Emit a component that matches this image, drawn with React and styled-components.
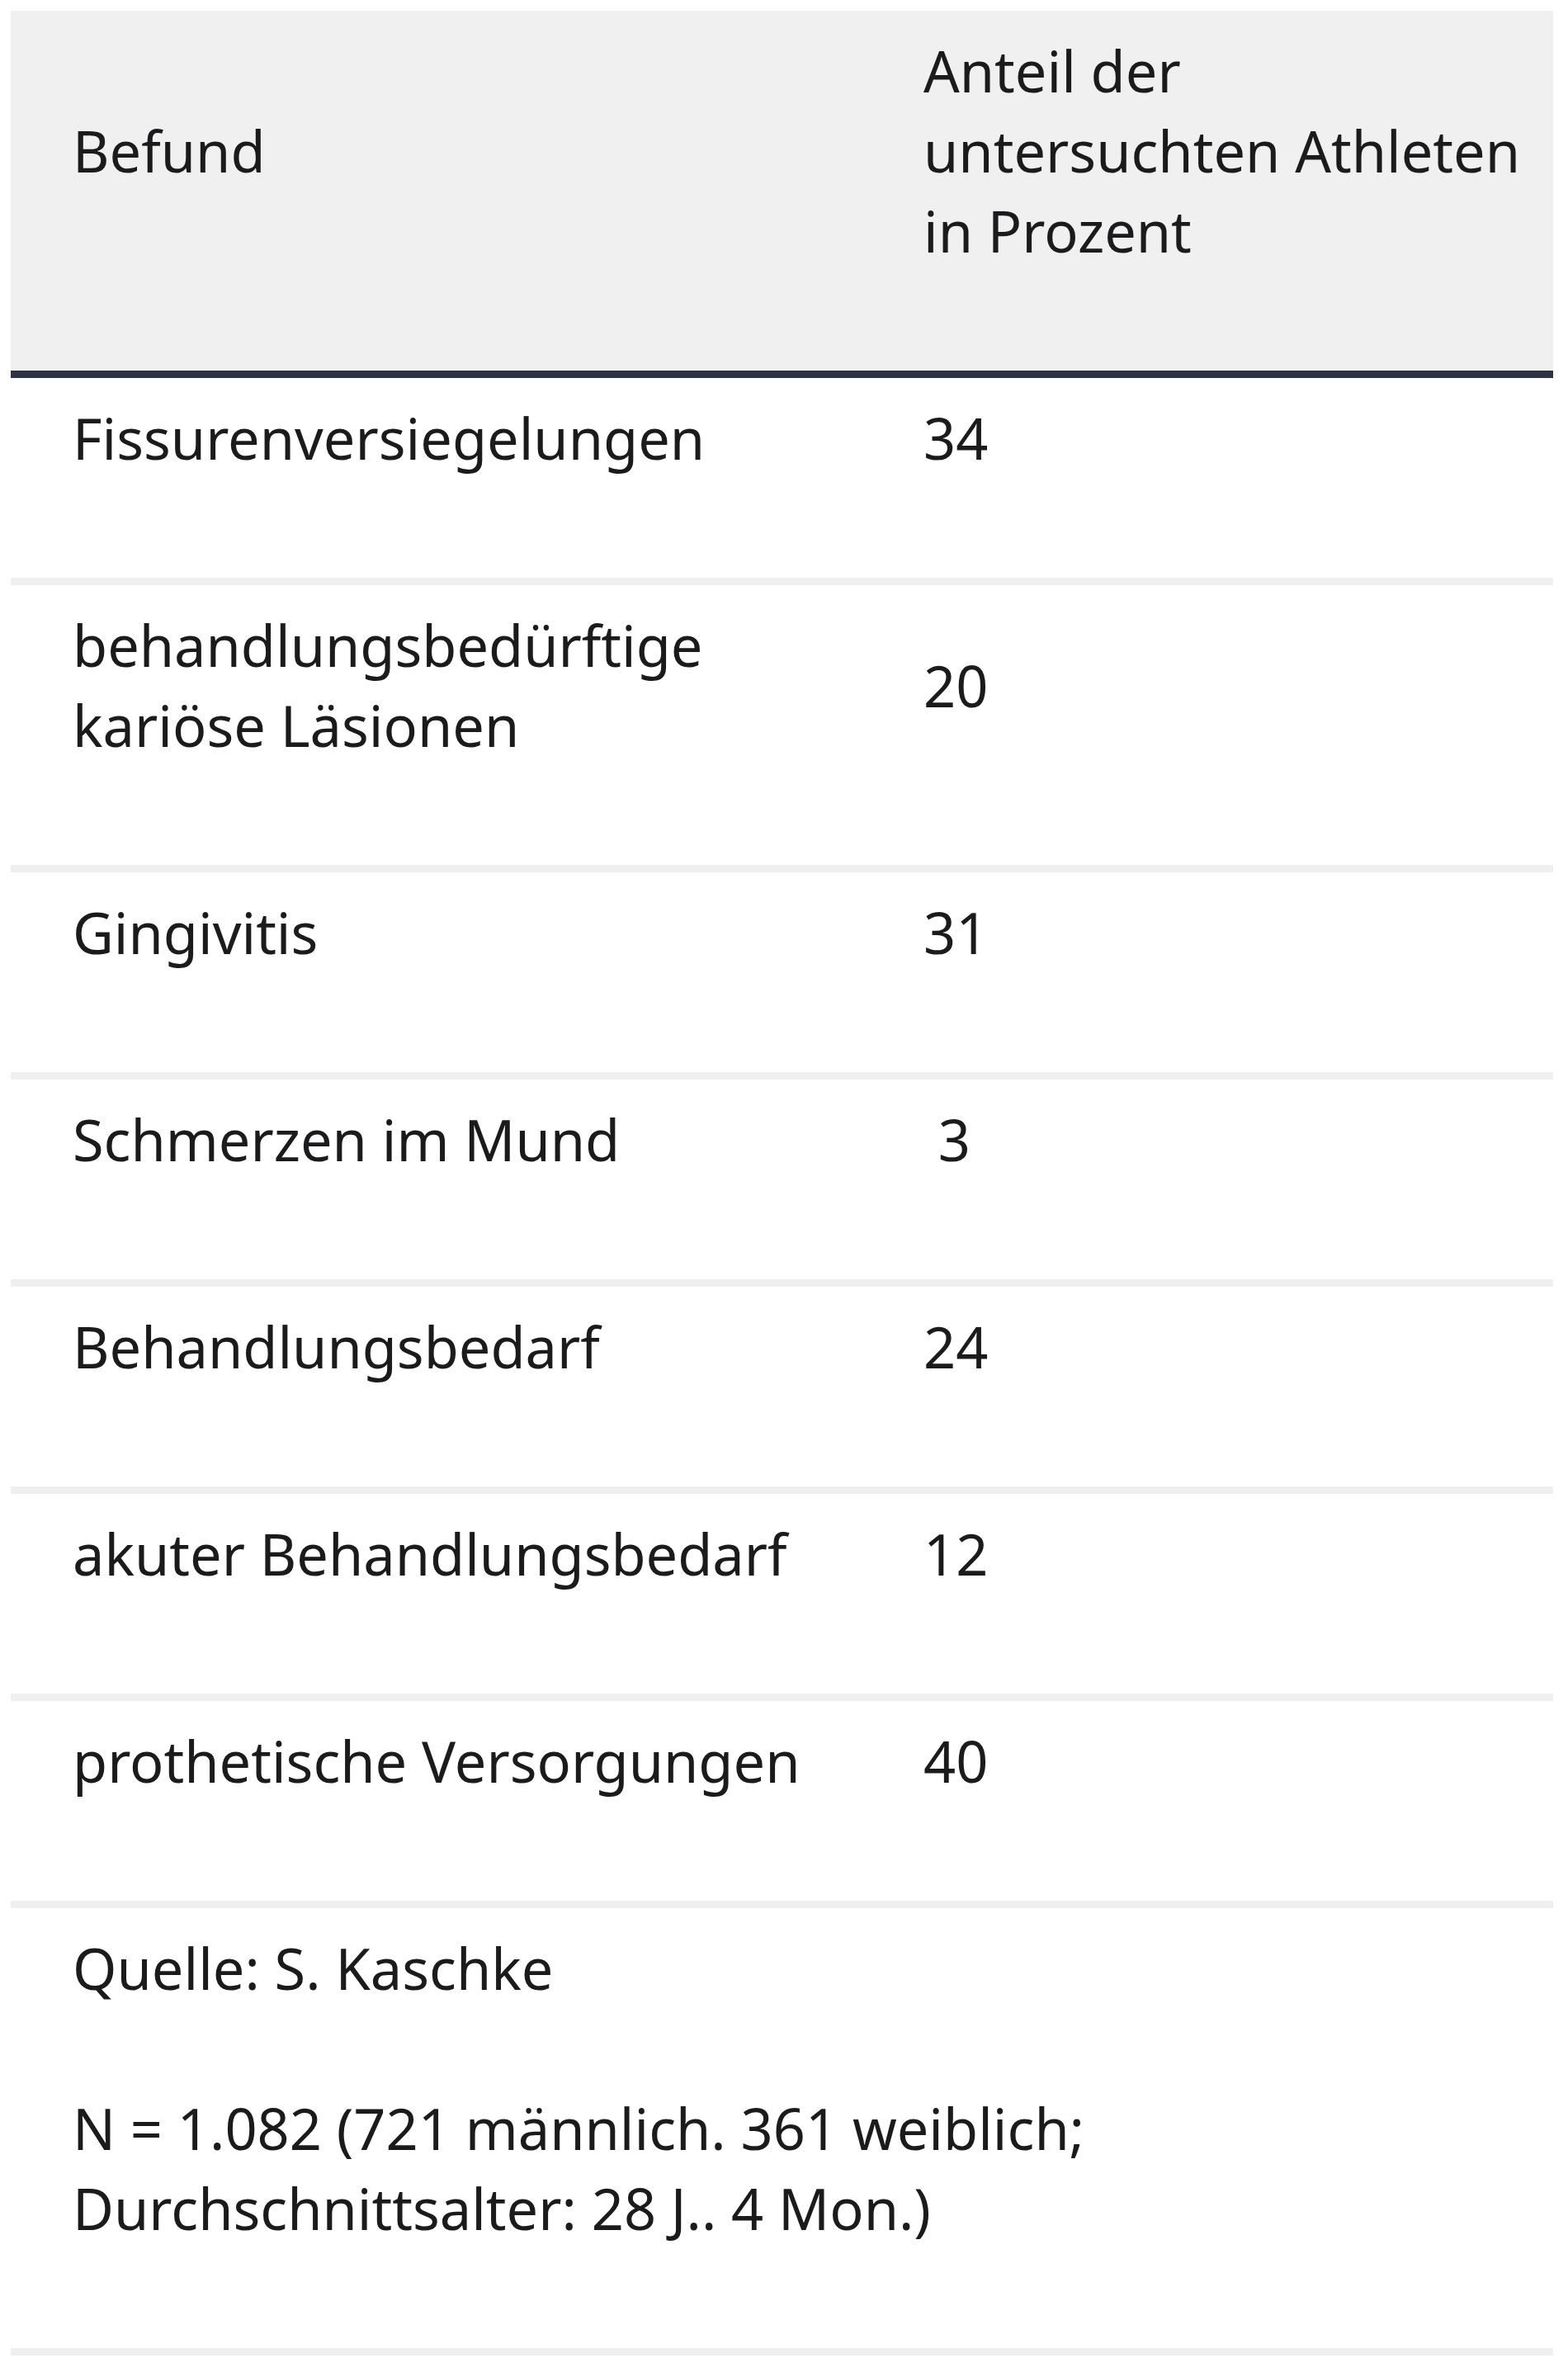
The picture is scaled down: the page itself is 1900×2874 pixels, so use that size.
import React from 'react';
import styled, { createGlobalStyle } from 'styled-components';

const GlobalStyle = createGlobalStyle`
  body {
    margin: 0;
    background: #ffffff;
    font-family: "Noto Sans", "Open Sans", sans-serif;
  }
`;

const Page = styled.div`
  padding: 13px 18px 13px 13px;
`;

const Table = styled.table`
  width: 100%;
  border-collapse: separate;
  border-spacing: 0;
  table-layout: fixed;
  color: #1b1b1d;
  font-size: 68.5px;
  line-height: 97px;
`;

const Col = styled.col`
  width: ${props => props.$width};
`;

const HeadCell = styled.th`
  background-color: #f0f0f0;
  border-bottom: 9px solid #2c3546;
  padding: 24px 20px 24px 75px;
  text-align: left;
  font-weight: 400;
  vertical-align: middle;
`;

const Cell = styled.td`
  border-bottom: 9px solid #efefef;
  padding: 24px 20px 24px 75px;
  text-align: left;
  vertical-align: middle;
`;

const Para = styled.p`
  margin: 0 0 97px;
`;

const rows = [
  { finding: 'Fissurenversiegelungen', share: '34' },
  { finding: 'behandlungsbedürftige kariöse Läsionen', share: '20' },
  { finding: 'Gingivitis', share: '31' },
  { finding: 'Schmerzen im Mund', share: '\u00a03' },
  { finding: 'Behandlungsbedarf', share: '24' },
  { finding: 'akuter Behandlungsbedarf', share: '12' },
  { finding: 'prothetische Versorgungen', share: '40' },
];

const App = () => {
  return (
    <Page>
      <GlobalStyle />
      <Table>
        <colgroup>
          <Col $width="1031px" />
          <Col $width="auto" />
        </colgroup>
        <thead>
          <tr>
            <HeadCell>
              <Para>Befund</Para>
            </HeadCell>
            <HeadCell>
              <Para>
                Anteil der
                <br />
                untersuchten Athleten
                <br />
                in Prozent
              </Para>
            </HeadCell>
          </tr>
        </thead>
        <tbody>
          {rows.map(row => (
            <tr key={row.finding}>
              <Cell>
                <Para>{row.finding}</Para>
              </Cell>
              <Cell>
                <Para>{row.share}</Para>
              </Cell>
            </tr>
          ))}
          <tr>
            <Cell colSpan={2}>
              <Para>Quelle: S. Kaschke</Para>
              <Para>
                N = 1.082 (721 männlich. 361 weiblich;
                <br />
                Durchschnittsalter: 28 J.. 4 Mon.)
              </Para>
            </Cell>
          </tr>
        </tbody>
      </Table>
    </Page>
  );
};

export default App;
